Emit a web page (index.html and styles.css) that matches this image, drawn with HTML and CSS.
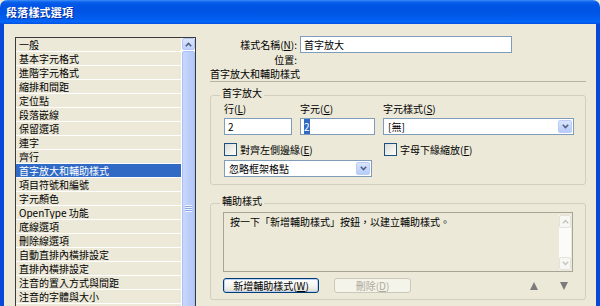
FILE: index.html
```html
<!DOCTYPE html>
<html>
<head>
<meta charset="utf-8">
<link rel="stylesheet" href="styles.css">
</head>
<body>
<div class="window">
  <div class="titlebar"><span class="title">段落樣式選項</span></div>
  <div class="frame">
    <div class="sidebar">
      <div class="list">
        <ul class="items">
          <li>一般</li>
          <li>基本字元格式</li>
          <li>進階字元格式</li>
          <li>縮排和間距</li>
          <li>定位點</li>
          <li>段落嵌線</li>
          <li>保留選項</li>
          <li>連字</li>
          <li>齊行</li>
          <li class="sel">首字放大和輔助樣式</li>
          <li>項目符號和編號</li>
          <li>字元顏色</li>
          <li>OpenType 功能</li>
          <li>底線選項</li>
          <li>刪除線選項</li>
          <li>自動直排內橫排設定</li>
          <li>直排內橫排設定</li>
          <li>注音的置入方式與間距</li>
          <li>注音的字體與大小</li>
          <li>注音的色彩與對齊</li>
        </ul>
        <div class="vscroll">
          <div class="sbtn"><svg width="7" height="5" viewBox="0 0 7 5"><polyline points="0.8,4.2 3.5,1.5 6.2,4.2" fill="none" stroke="#4d6185" stroke-width="1.6"/></svg></div>
          <div class="thumb"><span class="grip"></span></div>
        </div>
      </div>
    </div>
    <div class="main">
      <div class="name-row">
        <span class="lbl">樣式名稱(<u>N</u>):</span>
        <div class="textbox">首字放大</div>
      </div>
      <div class="loc-row"><span class="lbl">位置:</span></div>
      <div class="path">首字放大和輔助樣式</div>
      <div class="sep"></div>

      <fieldset class="group g1">
        <legend>首字放大</legend>
        <div class="fields">
          <div class="field">
            <span class="flabel">行(<u>L</u>)</span>
            <div class="textbox">2</div>
          </div>
          <div class="field">
            <span class="flabel">字元(<u>C</u>)</span>
            <div class="textbox"><span class="hl">2</span></div>
          </div>
          <div class="field">
            <span class="flabel">字元樣式(<u>S</u>)</span>
            <div class="combo"><span class="cval">[無]</span><span class="cbtn"><svg width="7" height="5" viewBox="0 0 7 5"><polyline points="0.8,0.8 3.5,3.5 6.2,0.8" fill="none" stroke="#4d6185" stroke-width="1.6"/></svg></span></div>
          </div>
        </div>
        <div class="checks">
          <div class="check c1"><span class="box"></span><span>對齊左側邊緣(<u>E</u>)</span></div>
          <div class="check c2"><span class="box"></span><span>字母下緣縮放(<u>F</u>)</span></div>
        </div>
        <div class="combo grid-combo"><span class="cval">忽略框架格點</span><span class="cbtn"><svg width="7" height="5" viewBox="0 0 7 5"><polyline points="0.8,0.8 3.5,3.5 6.2,0.8" fill="none" stroke="#4d6185" stroke-width="1.6"/></svg></span></div>
      </fieldset>

      <fieldset class="group g2">
        <legend>輔助樣式</legend>
        <div class="memo">
          <div class="memo-text">按一下「新增輔助樣式」按鈕，以建立輔助樣式。</div>
          <div class="mscroll">
            <div class="mbtn"><svg width="7" height="5" viewBox="0 0 7 5"><polyline points="0.8,4.2 3.5,1.5 6.2,4.2" fill="none" stroke="#c4c3bd" stroke-width="1.4"/></svg></div>
            <div class="mtrack"></div>
            <div class="mbtn"><svg width="7" height="5" viewBox="0 0 7 5"><polyline points="0.8,0.8 3.5,3.5 6.2,0.8" fill="none" stroke="#c4c3bd" stroke-width="1.4"/></svg></div>
          </div>
        </div>
        <div class="buttons">
          <div class="btn default">新增輔助樣式(<u>W</u>)</div>
          <div class="btn disabled">刪除(<u>D</u>)</div>
          <div class="spacer"></div>
          <span class="tri up"></span>
          <span class="tri down"></span>
        </div>
      </fieldset>
    </div>
  </div>
</div>
</body>
</html>
```

FILE: styles.css
```css
html, body {
  margin: 0;
  padding: 0;
  background: #ece9d8;
}

.window {
  width: 600px;
  height: 306px;
  overflow: hidden;
  display: flex;
  flex-direction: column;
  background: #ece9d8;
  font-family: "Noto Sans CJK TC", "Liberation Sans", sans-serif;
  font-size: 10px;
  color: #000;
}

.titlebar {
  flex: none;
  height: 24px;
  box-sizing: border-box;
  display: flex;
  align-items: center;
  padding-left: 6px;
  border-radius: 7px 7px 0 0;
  background: linear-gradient(to bottom, #3d8ef8 0px, #0a62ec 2px, #0055e6 5px, #0054e4 50%, #015ff2 82%, #0466fa 90%, #0050df 100%);
}

.title {
  color: #fff;
  font-weight: bold;
  font-size: 11px;
  letter-spacing: 0.2px;
  text-shadow: 1px 1px 0 #0a2a9a;
}

.frame {
  flex: 1;
  min-height: 0;
  display: flex;
  border-left: 4px solid #0848d8;
  border-right: 4px solid #0848d8;
}

.sidebar {
  flex: none;
  padding: 13px 0 0 11px;
}

.list {
  width: 181px;
  height: 330px;
  box-sizing: border-box;
  border: 1px solid #3a3a3a;
  display: flex;
  background: #fff;
}

.items {
  flex: 1;
  list-style: none;
  margin: 0;
  padding: 0;
  overflow: hidden;
}

.items li {
  height: 13px;
  line-height: 13px;
  border-bottom: 1px solid #fff;
  background: #ece9d8;
  padding-left: 3px;
  white-space: nowrap;
  overflow: hidden;
}

.items li.sel {
  background: #316ac5;
  color: #fff;
}

.vscroll {
  flex: none;
  width: 13px;
  margin-left: 1px;
  display: flex;
  flex-direction: column;
  gap: 1px;
  background: #fff;
}

.sbtn {
  height: 13px;
  box-sizing: border-box;
  border: 1px solid #b3c6f3;
  border-radius: 2px;
  background: linear-gradient(to bottom, #dbe5fd, #bfd0fa);
  display: flex;
  align-items: center;
  justify-content: center;
}

.thumb {
  height: 330px;
  box-sizing: border-box;
  border: 1px solid #aac0f4;
  border-radius: 2px;
  background: linear-gradient(to right, #c9d8fd, #bacdfa 60%, #b4c8f8);
  display: flex;
  align-items: center;
  justify-content: center;
}

.grip {
  width: 7px;
  height: 7px;
  background: repeating-linear-gradient(to bottom, #eef3ff 0, #eef3ff 1px, #8ea9e6 1px, #8ea9e6 2px);
}

.main {
  flex: none;
  width: 376px;
  margin-left: 14px;
  padding-top: 12px;
}

.name-row {
  display: grid;
  grid-template-columns: 87px 212px;
  column-gap: 3px;
  align-items: center;
}

.lbl {
  text-align: right;
  white-space: nowrap;
}

.textbox {
  height: 17px;
  box-sizing: border-box;
  border: 1px solid #7f9db9;
  background: #fff;
  padding: 0 3px;
  line-height: 15px;
  white-space: nowrap;
}

.loc-row {
  display: grid;
  grid-template-columns: 87px;
  line-height: 13px;
  height: 13px;
  margin-top: 0;
}

.path {
  line-height: 13px;
  height: 13px;
  margin-top: 1px;
}

.sep {
  height: 1px;
  background: #b5b29f;
  margin-top: 1px;
}

.group {
  margin: 0;
  min-width: 0;
  border: 1px solid #d0d0bf;
  border-radius: 3px;
}

.group legend {
  padding: 0 2px 4px;
  margin-left: -4px;
  line-height: 14px;
}

.g1 {
  margin-top: 4px;
  padding: 0 12px 7px 13px;
}

.fields {
  display: grid;
  grid-template-columns: 68px 75px 191px;
  column-gap: 8px;
  margin-top: -2px;
}

.field {
  display: flex;
  flex-direction: column;
}

.flabel {
  line-height: 14px;
  height: 14px;
  margin-bottom: 2px;
  white-space: nowrap;
}

.hl {
  background: #316ac5;
  color: #fff;
}

.combo {
  height: 17px;
  box-sizing: border-box;
  border: 1px solid #7f9db9;
  background: #fff;
  display: flex;
  align-items: stretch;
}

.cval {
  flex: 1;
  padding-left: 4px;
  line-height: 15px;
  white-space: nowrap;
}

.cbtn {
  flex: none;
  width: 14px;
  margin: 1px;
  box-sizing: border-box;
  border: 1px solid #bacdf6;
  border-radius: 2px;
  background: linear-gradient(to bottom, #d9e4fd, #b7cbf8);
  display: flex;
  align-items: center;
  justify-content: center;
}

.checks {
  display: grid;
  grid-template-columns: 151px 191px;
  column-gap: 8px;
  margin-top: 8px;
  height: 13px;
}

.check {
  display: flex;
  align-items: center;
  gap: 3px;
  line-height: 13px;
  white-space: nowrap;
}

.check.c2 {
  margin-left: 1px;
}

.box {
  flex: none;
  width: 13px;
  height: 13px;
  box-sizing: border-box;
  border: 1px solid #1c5180;
  background: linear-gradient(135deg, #dcdcd5, #ffffff);
}

.grid-combo {
  width: 148px;
  margin-top: 4px;
}

.g2 {
  margin-top: 9px;
  padding: 0 12px 6px 12px;
}

.g2 legend {
  margin-left: -3px;
}

.memo {
  height: 60px;
  box-sizing: border-box;
  border: 1px solid #a7a595;
  background: #ece9d8;
  display: flex;
}

.memo-text {
  flex: 1;
  padding: 2px 6px;
  line-height: 14px;
}

.mscroll {
  flex: none;
  width: 12px;
  margin: 2px 1px 1px 0;
  display: flex;
  flex-direction: column;
  background: #fbfbf9;
}

.mbtn {
  height: 13px;
  box-sizing: border-box;
  border: 1px solid #e3e2dc;
  border-radius: 2px;
  background: #f7f7f4;
  display: flex;
  align-items: center;
  justify-content: center;
}

.mtrack {
  flex: 1;
}

.buttons {
  display: flex;
  align-items: center;
  margin-top: 6px;
  height: 15px;
}

.btn {
  height: 15px;
  box-sizing: border-box;
  border-radius: 3px;
  display: flex;
  align-items: center;
  justify-content: center;
  line-height: 13px;
  white-space: nowrap;
}

.btn.default {
  width: 96px;
  border: 1px solid #003c74;
  background: linear-gradient(to bottom, #ffffff, #f3f3ee 60%, #dedbcd);
  box-shadow: inset 0 0 0 1px #b9d1f6;
}

.btn.disabled {
  width: 77px;
  margin-left: 15px;
  border: 1px solid #cac8bb;
  background: #f5f4ea;
  color: #aca899;
}

.spacer {
  flex: 1;
}

.tri {
  width: 0;
  height: 0;
  border-left: 4px solid transparent;
  border-right: 4px solid transparent;
}

.tri.up {
  border-bottom: 8px solid #7b7b7b;
  margin-right: 22px;
}

.tri.down {
  border-top: 8px solid #7b7b7b;
  margin-right: 5px;
}
```
